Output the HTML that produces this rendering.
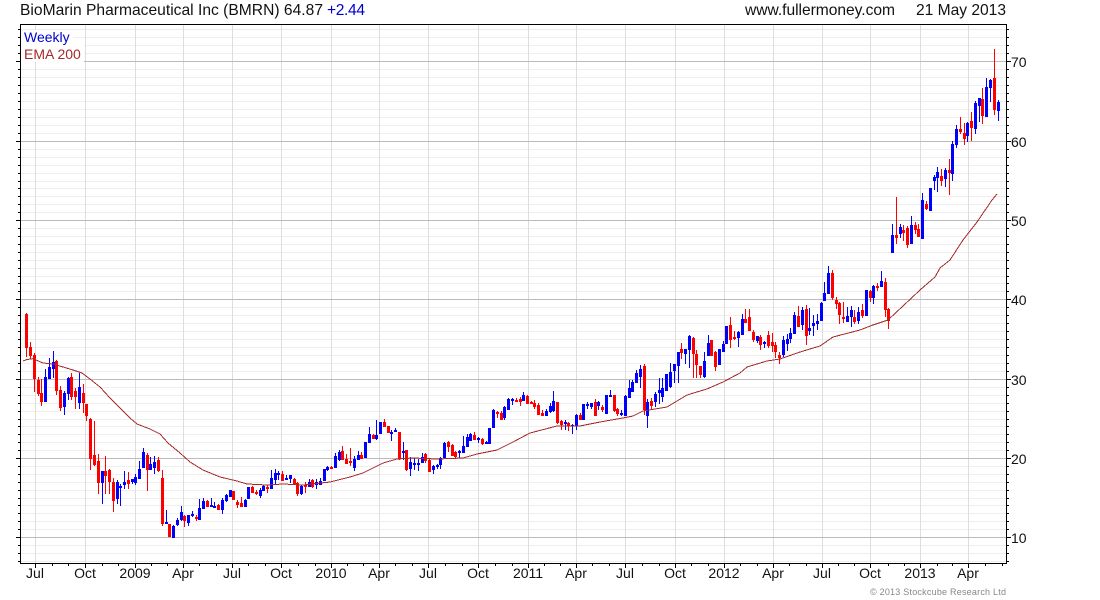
<!DOCTYPE html>
<html lang="en">
<head>
<meta charset="utf-8">
<title>BioMarin Pharmaceutical Inc (BMRN)</title>
<style>
html,body{margin:0;padding:0;background:#fff;width:1100px;height:600px;overflow:hidden}
svg{display:block}
text{font-family:"Liberation Sans",Arial,sans-serif}
</style>
</head>
<body>
<svg width="1100" height="600" viewBox="0 0 1100 600" xmlns="http://www.w3.org/2000/svg">
<rect width="1100" height="600" fill="#fff"/>
<g shape-rendering="crispEdges" fill="none">
<path stroke="#eeeeee" d="M20 29.5H1006M20 37.5H1006M20 45.5H1006M20 53.5H1006M20 69.5H1006M20 77.5H1006M20 85.5H1006M20 93.5H1006M20 101.5H1006M20 109.5H1006M20 117.5H1006M20 125.5H1006M20 133.5H1006M20 149.5H1006M20 157.5H1006M20 165.5H1006M20 173.5H1006M20 181.5H1006M20 188.5H1006M20 196.5H1006M20 204.5H1006M20 212.5H1006M20 228.5H1006M20 236.5H1006M20 244.5H1006M20 252.5H1006M20 260.5H1006M20 268.5H1006M20 276.5H1006M20 283.5H1006M20 291.5H1006M20 307.5H1006M20 315.5H1006M20 323.5H1006M20 331.5H1006M20 339.5H1006M20 347.5H1006M20 355.5H1006M20 363.5H1006M20 371.5H1006M20 387.5H1006M20 395.5H1006M20 403.5H1006M20 411.5H1006M20 419.5H1006M20 426.5H1006M20 434.5H1006M20 442.5H1006M20 450.5H1006M20 466.5H1006M20 474.5H1006M20 482.5H1006M20 490.5H1006M20 498.5H1006M20 505.5H1006M20 513.5H1006M20 521.5H1006M20 529.5H1006M20 545.5H1006M20 553.5H1006M20 561.5H1006"/>
<path stroke="#dddddd" d="M35.5 25V563M85.5 25V563M135.5 25V563M183.5 25V563M232.5 25V563M281.5 25V563M331.5 25V563M379.5 25V563M428.5 25V563M478.5 25V563M528.5 25V563M576.5 25V563M625.5 25V563M675.5 25V563M724.5 25V563M773.5 25V563M822.5 25V563M870.5 25V563M920.5 25V563M968.5 25V563"/>
<path stroke="#bbbbbb" d="M20 61.5H1006M20 141.5H1006M20 220.5H1006M20 299.5H1006M20 379.5H1006M20 458.5H1006M20 537.5H1006"/>
</g>
<rect x="21" y="30" width="52" height="15" fill="#fff"/>
<rect x="21" y="45" width="63" height="17" fill="#fff"/>
<g fill="none" shape-rendering="crispEdges">
<path stroke="#0000ff" stroke-width="1" d="M45.5 369V402M49.5 358V379M53.5 351V378M64.5 391V415M68.5 377V400M79.5 373V409M102.5 471V504M117.5 480V504M120.5 484V506M124.5 471V489M132.5 479V484M135.5 474V485M139.5 461V479M143.5 448V468M150.5 457V470M154.5 456V474M166.5 510V524M173.5 525V538M177.5 518V526M181.5 506V521M188.5 515V526M192.5 511V517M199.5 499V520M203.5 498V509M211.5 498V507M214.5 502V508M222.5 498V514M226.5 494V502M230.5 490V497M245.5 499V507M248.5 487V499M260.5 488V498M263.5 485V491M271.5 470V489M275.5 469V484M278.5 471V480M286.5 475V480M290.5 475V483M301.5 485V495M309.5 479V487M316.5 479V489M320.5 478V485M324.5 469V481M327.5 466V471M335.5 453V468M339.5 450V461M354.5 456V471M358.5 451V460M365.5 442V458M369.5 427V443M376.5 420V440M380.5 422V434M391.5 430V441M395.5 428V432M403.5 442V460M410.5 457V476M414.5 458V470M418.5 459V471M422.5 453V463M433.5 465V474M437.5 464V469M440.5 457V469M444.5 442V458M459.5 450V458M463.5 436V453M467.5 434V447M470.5 433V441M478.5 437V443M486.5 441V444M489.5 428V444M493.5 409V428M504.5 406V420M508.5 398V410M512.5 398V405M523.5 392V401M546.5 409V416M550.5 403V413M553.5 391V412M565.5 420V430M572.5 424V434M576.5 414V430M583.5 404V420M587.5 402V409M591.5 403V409M598.5 401V410M606.5 395V414M610.5 390V397M621.5 410V416M625.5 395V416M629.5 380V398M632.5 380V392M636.5 370V383M640.5 365V388M647.5 399V428M655.5 392V407M659.5 378V404M662.5 378V402M666.5 374V391M670.5 363V388M674.5 364V383M678.5 352V383M685.5 349V364M689.5 335V368M704.5 352V378M708.5 335V356M719.5 349V365M723.5 341V352M726.5 326V344M738.5 331V347M742.5 314V335M757.5 336V343M764.5 341V348M783.5 336V357M787.5 334V351M790.5 328V343M794.5 312V334M802.5 307V330M809.5 308V335M813.5 315V336M817.5 314V330M821.5 302V321M824.5 282V301M828.5 266V294M847.5 307V322M851.5 306V327M858.5 307V324M866.5 290V316M873.5 285V304M881.5 271V287M892.5 224V253M900.5 224V238M911.5 216V244M922.5 193V239M930.5 188V211M934.5 175V190M937.5 167V192M945.5 168V187M952.5 141V181M956.5 125V148M967.5 122V142M975.5 101V134M979.5 98V122M986.5 78V117M990.5 79V102M998.5 100V121"/>
<path stroke="#0000ff" stroke-width="3" d="M45.5 377V402M49.5 367V379M53.5 362V369M64.5 393V407M68.5 378V394M79.5 387V403M102.5 471V483M117.5 482V499M120.5 486V488M124.5 482V485M132.5 479V482M135.5 477V483M139.5 469V479M143.5 452V468M150.5 464V470M154.5 462V468M166.5 522V524M173.5 526V538M177.5 520V525M181.5 512V520M188.5 515V523M192.5 514V516M199.5 508V520M203.5 501V509M211.5 505V507M214.5 506V508M222.5 500V510M226.5 495V501M230.5 490V497M245.5 500V507M248.5 487V499M260.5 490V496M263.5 486V491M271.5 478V489M275.5 473V480M278.5 473V475M286.5 478V480M290.5 475V479M301.5 486V494M309.5 482V487M316.5 482V485M320.5 481V485M324.5 469V481M327.5 467V470M335.5 456V468M339.5 452V460M354.5 459V468M358.5 455V460M365.5 442V458M369.5 434V443M376.5 435V439M380.5 422V434M391.5 432V434M395.5 430V432M403.5 451V453M410.5 462V469M414.5 463V465M418.5 463V465M422.5 457V463M433.5 466V470M437.5 465V467M440.5 458V465M444.5 443V458M459.5 451V453M463.5 446V453M467.5 437V447M470.5 434V441M478.5 438V440M486.5 442V444M489.5 428V444M493.5 410V428M504.5 407V418M508.5 399V410M512.5 399V401M523.5 395V401M546.5 411V416M550.5 406V412M553.5 401V411M565.5 422V424M572.5 425V426M576.5 415V426M583.5 404V420M587.5 404V406M591.5 403V407M598.5 402V406M606.5 395V414M610.5 395V397M621.5 413V415M625.5 396V416M629.5 388V398M632.5 382V392M636.5 373V383M640.5 369V377M647.5 402V416M655.5 394V402M659.5 390V393M662.5 388V397M666.5 374V391M670.5 372V387M674.5 364V371M678.5 352V366M685.5 349V354M689.5 336V350M704.5 361V377M708.5 343V356M719.5 349V365M723.5 344V352M726.5 326V344M738.5 332V338M742.5 319V335M757.5 336V341M764.5 342V344M783.5 340V355M787.5 339V344M790.5 333V339M794.5 315V334M802.5 310V325M809.5 328V331M813.5 323V326M817.5 321V324M821.5 303V321M824.5 293V301M828.5 273V294M847.5 316V322M851.5 310V317M858.5 312V321M866.5 290V316M873.5 286V298M881.5 281V287M892.5 235V253M900.5 227V234M911.5 225V244M922.5 200V239M930.5 188V211M934.5 177V181M937.5 172V178M945.5 170V179M952.5 144V174M956.5 129V145M967.5 123V136M975.5 103V129M979.5 98V106M986.5 87V117M990.5 80V88M998.5 102V111"/>
<path stroke="#ff0000" stroke-width="1" d="M26.5 313V357M30.5 342V359M34.5 353V392M38.5 377V396M41.5 379V406M56.5 360V395M60.5 386V411M71.5 373V400M75.5 388V409M83.5 384V413M86.5 404V421M90.5 418V470M94.5 421V466M98.5 454V494M105.5 456V494M109.5 469V494M113.5 478V512M128.5 472V489M147.5 453V491M158.5 457V472M162.5 470V526M169.5 524V537M184.5 515V527M196.5 515V521M207.5 500V507M218.5 504V510M233.5 491V500M237.5 500V508M241.5 497V507M252.5 486V493M256.5 490V495M267.5 485V493M282.5 471V481M294.5 478V485M297.5 482V496M305.5 482V493M312.5 479V488M331.5 466V469M342.5 446V460M346.5 454V464M350.5 448V466M361.5 452V459M373.5 434V439M384.5 419V427M388.5 426V433M399.5 432V460M406.5 450V471M425.5 453V463M429.5 459V472M448.5 441V452M452.5 444V456M455.5 451V458M474.5 432V440M482.5 438V445M497.5 411V418M501.5 411V420M516.5 398V402M520.5 397V406M527.5 395V404M531.5 401V404M534.5 400V409M538.5 403V415M542.5 410V416M557.5 402V424M561.5 420V430M568.5 422V431M580.5 413V420M595.5 399V416M602.5 405V412M614.5 395V412M617.5 408V416M644.5 364V415M651.5 398V410M681.5 343V359M693.5 337V378M696.5 350V378M700.5 366V378M711.5 340V356M715.5 351V371M730.5 317V348M734.5 331V340M745.5 309V323M749.5 309V331M753.5 330V342M760.5 335V350M768.5 331V348M772.5 333V352M775.5 342V358M779.5 352V364M798.5 306V327M806.5 305V345M832.5 270V300M836.5 297V309M839.5 302V324M843.5 302V323M854.5 310V324M862.5 304V318M870.5 290V302M877.5 283V291M885.5 278V317M888.5 308V329M896.5 197V244M903.5 225V241M907.5 226V248M915.5 222V234M918.5 224V237M926.5 201V210M941.5 169V186M949.5 159V195M960.5 117V134M964.5 123V145M971.5 112V141M982.5 88V124M994.5 49V115"/>
<path stroke="#ff0000" stroke-width="3" d="M26.5 314V348M30.5 347V356M34.5 355V379M38.5 380V394M41.5 393V402M56.5 361V391M60.5 390V408M71.5 377V397M75.5 391V397M83.5 393V403M86.5 404V416M90.5 419V459M94.5 455V465M98.5 461V483M105.5 471V476M109.5 470V482M113.5 482V501M128.5 480V484M147.5 455V470M158.5 460V471M162.5 478V524M169.5 524V537M184.5 516V521M196.5 517V519M207.5 501V507M218.5 505V510M233.5 491V500M237.5 502V505M241.5 503V507M252.5 487V493M256.5 492V494M267.5 487V489M282.5 474V481M294.5 479V485M297.5 483V494M305.5 485V487M312.5 480V487M331.5 467V469M342.5 451V460M346.5 459V464M350.5 461V463M361.5 455V459M373.5 435V439M384.5 422V427M388.5 426V433M399.5 432V459M406.5 450V470M425.5 454V461M429.5 460V472M448.5 442V447M452.5 445V456M455.5 452V457M474.5 435V440M482.5 439V444M497.5 412V414M501.5 413V420M516.5 400V402M520.5 399V402M527.5 396V404M531.5 402V404M534.5 403V407M538.5 405V415M542.5 413V416M557.5 402V423M561.5 421V425M568.5 423V426M580.5 415V420M595.5 402V416M602.5 407V410M614.5 395V411M617.5 409V414M644.5 366V410M651.5 401V406M681.5 349V353M693.5 338V354M696.5 354V365M700.5 366V375M711.5 340V356M715.5 352V367M730.5 325V340M734.5 337V339M745.5 319V323M749.5 317V331M753.5 332V340M760.5 337V345M768.5 335V346M772.5 342V346M775.5 345V352M779.5 355V358M798.5 316V327M806.5 309V336M832.5 273V298M836.5 300V304M839.5 303V315M843.5 317V319M854.5 317V322M862.5 310V316M870.5 291V298M877.5 286V288M885.5 282V310M888.5 309V321M896.5 235V238M903.5 230V233M907.5 228V245M915.5 225V230M918.5 229V237M926.5 204V209M941.5 176V181M949.5 170V173M960.5 129V132M964.5 133V139M971.5 121V128M982.5 99V116M994.5 78V110"/>
</g>
<path fill="none" stroke="#a52a2a" stroke-width="1" shape-rendering="crispEdges" d="M23 361L27 359.5L33 358.7L43 363L53 364L63 367L73 370L82 373L90 379L100 387L110 398L120 408L130 418L137 424L150 429L160 434L168 443L180 453L190 462L203 470L220 477L237 481L247 484L267 485L283 484L303 485L330 482L350 477L363 473L383 463L397 459L413 458L437 459L463 458L477 454L497 450L513 442L530 433L557 426L580 426L600 422L623 418L633 416L643 411L667 407L687 395L707 389L723 382L740 373L747 367L767 361L780 359L800 352L820 346L833 337L860 330L873 325L888 320L903 306L920 290L935 277L940 268L950 260L963 240L977 222L992 200L997 194"/>
<g shape-rendering="crispEdges" fill="none" stroke="#000">
<path d="M20.5 24.5H1006.5V563.5H20.5Z"/>
<path d="M18 29.5H20M18 37.5H20M18 45.5H20M18 53.5H20M18 69.5H20M18 77.5H20M18 85.5H20M18 93.5H20M18 101.5H20M18 109.5H20M18 117.5H20M18 125.5H20M18 133.5H20M18 149.5H20M18 157.5H20M18 165.5H20M18 173.5H20M18 181.5H20M18 188.5H20M18 196.5H20M18 204.5H20M18 212.5H20M18 228.5H20M18 236.5H20M18 244.5H20M18 252.5H20M18 260.5H20M18 268.5H20M18 276.5H20M18 283.5H20M18 291.5H20M18 307.5H20M18 315.5H20M18 323.5H20M18 331.5H20M18 339.5H20M18 347.5H20M18 355.5H20M18 363.5H20M18 371.5H20M18 387.5H20M18 395.5H20M18 403.5H20M18 411.5H20M18 419.5H20M18 426.5H20M18 434.5H20M18 442.5H20M18 450.5H20M18 466.5H20M18 474.5H20M18 482.5H20M18 490.5H20M18 498.5H20M18 505.5H20M18 513.5H20M18 521.5H20M18 529.5H20M18 545.5H20M18 553.5H20M18 561.5H20M16 61.5H20M16 141.5H20M16 220.5H20M16 299.5H20M16 379.5H20M16 458.5H20M16 537.5H20"/>
<path d="M1007 29.5H1009M1007 37.5H1009M1007 45.5H1009M1007 53.5H1009M1007 69.5H1009M1007 77.5H1009M1007 85.5H1009M1007 93.5H1009M1007 101.5H1009M1007 109.5H1009M1007 117.5H1009M1007 125.5H1009M1007 133.5H1009M1007 149.5H1009M1007 157.5H1009M1007 165.5H1009M1007 173.5H1009M1007 181.5H1009M1007 188.5H1009M1007 196.5H1009M1007 204.5H1009M1007 212.5H1009M1007 228.5H1009M1007 236.5H1009M1007 244.5H1009M1007 252.5H1009M1007 260.5H1009M1007 268.5H1009M1007 276.5H1009M1007 283.5H1009M1007 291.5H1009M1007 307.5H1009M1007 315.5H1009M1007 323.5H1009M1007 331.5H1009M1007 339.5H1009M1007 347.5H1009M1007 355.5H1009M1007 363.5H1009M1007 371.5H1009M1007 387.5H1009M1007 395.5H1009M1007 403.5H1009M1007 411.5H1009M1007 419.5H1009M1007 426.5H1009M1007 434.5H1009M1007 442.5H1009M1007 450.5H1009M1007 466.5H1009M1007 474.5H1009M1007 482.5H1009M1007 490.5H1009M1007 498.5H1009M1007 505.5H1009M1007 513.5H1009M1007 521.5H1009M1007 529.5H1009M1007 545.5H1009M1007 553.5H1009M1007 561.5H1009M1007 61.5H1011M1007 141.5H1011M1007 220.5H1011M1007 299.5H1011M1007 379.5H1011M1007 458.5H1011M1007 537.5H1011"/>
<path d="M35.5 564V568M85.5 564V568M135.5 564V568M183.5 564V568M232.5 564V568M281.5 564V568M331.5 564V568M379.5 564V568M428.5 564V568M478.5 564V568M528.5 564V568M576.5 564V568M625.5 564V568M675.5 564V568M724.5 564V568M773.5 564V568M822.5 564V568M870.5 564V568M920.5 564V568M968.5 564V568"/>
<path d="M52.5 564V566M68.5 564V566M102.5 564V566M118.5 564V566M151.5 564V566M167.5 564V566M199.5 564V566M216.5 564V566M248.5 564V566M265.5 564V566M298.5 564V566M315.5 564V566M347.5 564V566M363.5 564V566M395.5 564V566M412.5 564V566M445.5 564V566M462.5 564V566M495.5 564V566M512.5 564V566M544.5 564V566M560.5 564V566M592.5 564V566M609.5 564V566M642.5 564V566M659.5 564V566M691.5 564V566M708.5 564V566M740.5 564V566M757.5 564V566M789.5 564V566M806.5 564V566M838.5 564V566M854.5 564V566M888.5 564V566M904.5 564V566M937.5 564V566M952.5 564V566M985.5 564V566M1002.5 564V566"/>
</g>
<text x="20" y="15" font-size="15.6" fill="#111" textLength="303" lengthAdjust="spacing">BioMarin Pharmaceutical Inc (BMRN) 64.87</text>
<text x="327" y="15" font-size="15.6" fill="#0000cc" textLength="38" lengthAdjust="spacing">+2.44</text>
<text x="745" y="15" font-size="15.6" fill="#111" textLength="150" lengthAdjust="spacing">www.fullermoney.com</text>
<text x="916" y="15" font-size="15.6" fill="#111" textLength="90" lengthAdjust="spacing">21 May 2013</text>
<text x="24" y="42" font-size="14" fill="#0000cc">Weekly</text>
<text x="24" y="59" font-size="14" fill="#a52a2a">EMA 200</text>
<g font-size="14" fill="#111">
<text x="1011" y="67">70</text>
<text x="1011" y="147">60</text>
<text x="1011" y="226">50</text>
<text x="1011" y="305">40</text>
<text x="1011" y="385">30</text>
<text x="1011" y="464">20</text>
<text x="1011" y="543">10</text>
</g>
<g font-size="14" fill="#111" text-anchor="middle">
<text x="35" y="578">Jul</text>
<text x="85" y="578">Oct</text>
<text x="135" y="578">2009</text>
<text x="183" y="578">Apr</text>
<text x="232" y="578">Jul</text>
<text x="281" y="578">Oct</text>
<text x="331" y="578">2010</text>
<text x="379" y="578">Apr</text>
<text x="428" y="578">Jul</text>
<text x="478" y="578">Oct</text>
<text x="528" y="578">2011</text>
<text x="576" y="578">Apr</text>
<text x="625" y="578">Jul</text>
<text x="675" y="578">Oct</text>
<text x="724" y="578">2012</text>
<text x="773" y="578">Apr</text>
<text x="822" y="578">Jul</text>
<text x="870" y="578">Oct</text>
<text x="920" y="578">2013</text>
<text x="968" y="578">Apr</text>
</g>
<text x="870" y="595" font-size="9" fill="#888" textLength="136" lengthAdjust="spacing">© 2013 Stockcube Research Ltd</text>
</svg>
</body>
</html>
